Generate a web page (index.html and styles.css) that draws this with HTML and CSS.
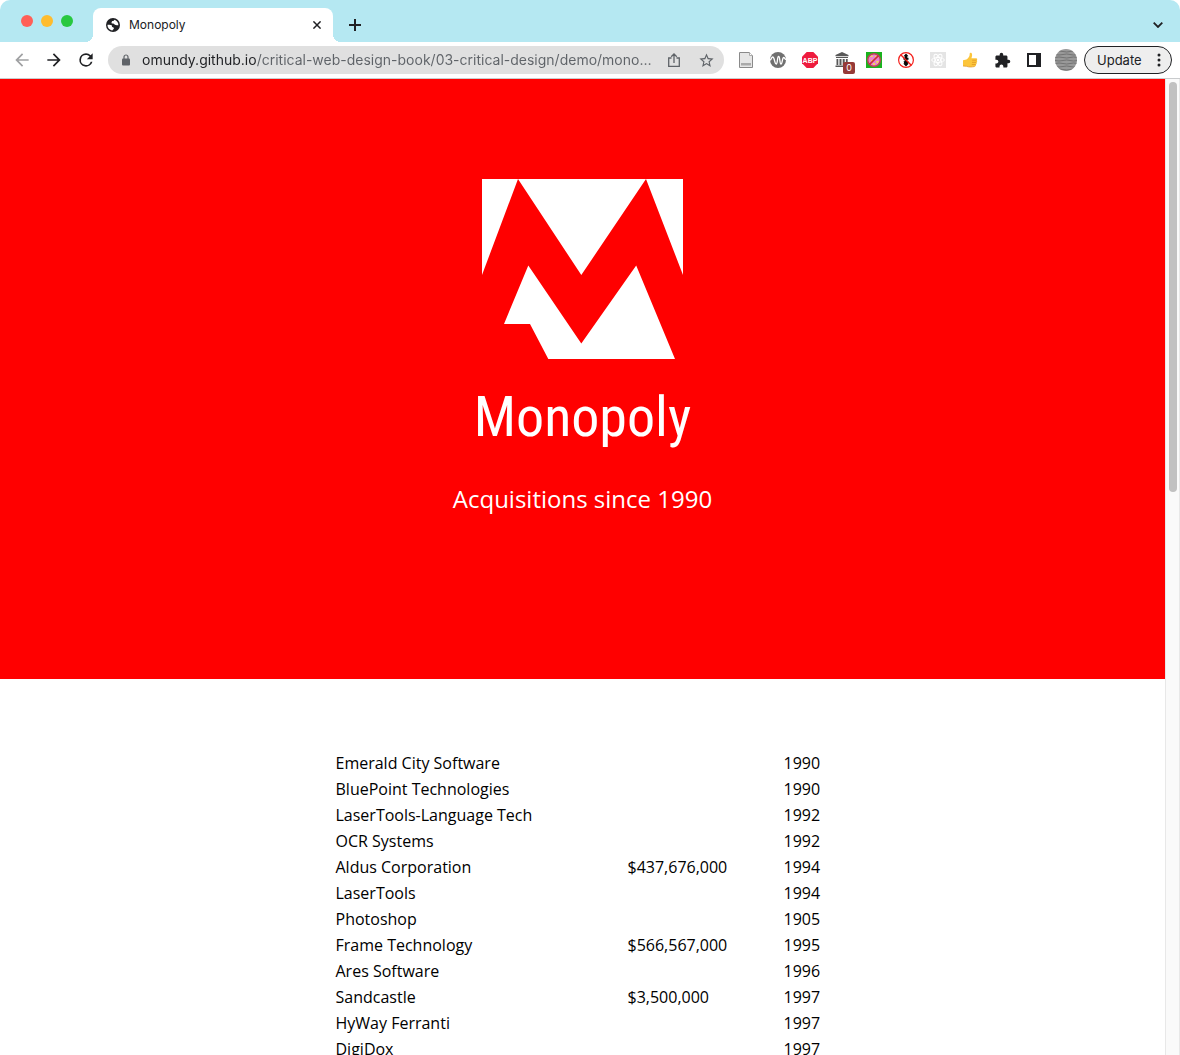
FILE: index.html
```html
<!DOCTYPE html>
<html lang="en">
<head>
<meta charset="utf-8">
<meta name="viewport" content="width=device-width, initial-scale=1">
<title>Monopoly</title>
<link rel="stylesheet" href="styles.css">
</head>
<body>
<div class="browser">
  <header class="tab-strip">
    <div class="traffic-lights">
      <button class="light light-close" aria-label="Close window"></button>
      <button class="light light-min" aria-label="Minimize window"></button>
      <button class="light light-max" aria-label="Zoom window"></button>
    </div>
    <div class="tab">
      <svg class="tab-icon" viewBox="0 0 14 14" aria-hidden="true"><circle cx="7" cy="7" r="7" fill="#202124"/><path d="M1.500 6.800c1.700-.2 3.400-.2 4.200.5.600.7-.1 1.300.6 1.800.8.400 1.600.200 1.600 1.300-.1 1.100-1.400.9-1.500 2.100C3.600 12.200 1.400 9.900 1.500 6.800zM8.300 1.700c0 .9-.9 1.200-1.900 1.400-.8.300-.3 1.100-1 1.600.1.700 1 .8 1.700.9 1.200.2 1.300 1.300 2.600 1.300 1.100 0 1.500.6 2.700.3C12.500 4.400 10.700 2.200 8.300 1.700z" fill="#fff"/></svg>
      <span class="tab-title">Monopoly</span>
      <button class="tab-close" aria-label="Close tab"><svg viewBox="0 0 8 8" width="8" height="8"><path d="M.4.4l7.200 7.200M7.600.4L.4 7.600" stroke="#202124" stroke-width="1.500"/></svg></button>
    </div>
    <button class="strip-button" aria-label="New tab"><svg viewBox="0 0 12 12" width="12" height="12"><path d="M6 0v12M0 6h12" stroke="#202124" stroke-width="2"/></svg></button>
    <button class="strip-button tab-search" aria-label="Search tabs"><svg viewBox="0 0 10 6" width="10" height="6"><path d="M.7.7L5 5 9.300.7" fill="none" stroke="#202124" stroke-width="1.800"/></svg></button>
  </header>

  <div class="toolbar">
    <nav class="button-row" aria-label="History">
      <button class="tool" aria-label="Back"><svg viewBox="0 0 24 24" width="20" height="20"><path fill="#a0a1a3" d="M20 11H7.830l5.590-5.590L12 4l-8 8 8 8 1.410-1.410L7.830 13H20z"/></svg></button>
      <button class="tool" aria-label="Forward"><svg viewBox="0 0 24 24" width="20" height="20"><path fill="#202124" d="M12 4l-1.410 1.410L16.170 11H4v2h12.170l-5.580 5.590L12 20l8-8z"/></svg></button>
      <button class="tool" aria-label="Reload"><svg viewBox="0 0 24 24" width="20" height="20"><path fill="#202124" d="M17.650 6.350A7.960 7.960 0 0 0 12 4a8 8 0 1 0 7.730 10h-2.080A6 6 0 1 1 12 6c1.660 0 3.140.69 4.220 1.780L13 11h7V4z"/></svg></button>
    </nav>
    <div class="omnibox">
      <svg class="lock" viewBox="0 0 8 12" aria-hidden="true"><path d="M2 5V3a2 2 0 0 1 4 0v2" fill="none" stroke="#5f6368" stroke-width="1.200"/><rect y="4.500" width="8" height="7" rx="1" fill="#5f6368"/></svg>
      <input class="url" type="text" aria-label="Address" value="omundy.github.io/critical-web-design-book/03-critical-design/demo/mono…">
      <button class="tool" aria-label="Share"><svg viewBox="0 0 12 14" width="12" height="14"><path d="M3.500 5H.7v8.300h10.600V5H8.500M6 10V1.200M3.200 3.700L6 1l2.800 2.700" fill="none" stroke="#5f6368" stroke-width="1.300"/></svg></button>
      <button class="tool" aria-label="Bookmark"><svg viewBox="0 0 24 24" width="17" height="17"><path fill="#5f6368" d="M22 9.240l-7.190-.62L12 2 9.190 8.630 2 9.240l5.460 4.730L5.820 21 12 17.270 18.180 21l-1.630-7.030zM12 15.400l-3.760 2.270 1-4.280-3.320-2.880 4.380-.38L12 6.100l1.710 4.040 4.380.38-3.320 2.880 1 4.280z"/></svg></button>
    </div>
    <div class="button-row">
      <button class="tool" aria-label="Page notes"><svg viewBox="0 0 16 16" width="16" height="16"><path d="M1.500.5h10l3 3v12h-13z" fill="#e6e6e6" stroke="#8a8a8a"/><path d="M11.500.5v3h3" fill="#fff" stroke="#aaa"/><path d="M3 11h10v2.500H3z" fill="#aaa"/></svg></button>
      <button class="tool" aria-label="Accessibility checker"><svg viewBox="0 0 16 16" width="16" height="16"><circle cx="8" cy="8" r="8" fill="#707070"/><path d="M0 8c1.500 0 1.200-3 2.700-3C4.600 5 4.500 12 6.200 12S7 4.500 8.600 4.500 9.500 12 11 12s1.100-6.500 2.700-6.500c1 0 1 2 2.300 2" fill="none" stroke="#fff" stroke-width="1.300"/></svg></button>
      <button class="tool" aria-label="Ad blocker"><svg viewBox="0 0 16 16" width="16" height="16"><path d="M4.700 0h6.600L16 4.700v6.600L11.300 16H4.700L0 11.300V4.700z" fill="#ee1b3e"/><text x="8" y="10.500" text-anchor="middle" class="abp">ABP</text></svg></button>
      <button class="tool" aria-label="Web archive, 0 captures"><svg viewBox="0 0 16 16" width="16" height="16"><path d="M8 0l6.500 3v1.200h-13V3zM2 5h12v1H2zM2.500 7h1.800v6H2.500zm3 0h2v6h-2zm3.200 0h2v6h-2zm3.200 0h1.800v6h-1.800zM1.500 13.500h13V15h-13z" fill="#585858"/></svg><span class="badge">0</span></button>
      <button class="tool" aria-label="Tracker blocker"><svg viewBox="0 0 16 16" width="16" height="16"><path fill="#19b21d" d="M0 0h16v16H0z"/><circle cx="8" cy="8" r="6.300" fill="#e983ce" stroke="#bd4056" stroke-width="1.500"/><path d="M4 5l2-2 1 2zM9 4h2v2H9zM5 8h2v2H5zM10 9h3l-2 3zM7 11h2v2H7z" fill="#f3d75b"/><path d="M12.400 3.600l-8.800 8.800" stroke="#c92c3c" stroke-width="1.500"/></svg></button>
      <button class="tool" aria-label="Do not track"><svg viewBox="0 0 16 16" width="16" height="16"><path d="M8 1.500l2.500 2.800H9.300v1.500h1.200v2H9.300v1.500h1.200L9.800 11.500h1L8 14.500l-2.800-3h1L5.600 9.300h1V7.800H5.500v-2h1.200V4.300H5.500z" fill="#080808"/><circle cx="8" cy="8" r="7.400" fill="none" stroke="#f4201c" stroke-width="1.200"/><path d="M2.700 2.700l10.600 10.600" stroke="#f4201c" stroke-width="1.300"/></svg></button>
      <button class="tool" aria-label="React tools"><svg viewBox="0 0 16 16" width="16" height="16"><path fill="#e4e4e4" d="M0 0h16v16H0z"/><g fill="none" stroke="#fff"><ellipse cx="8" cy="8" rx="6.300" ry="2.500"/><ellipse cx="8" cy="8" rx="6.300" ry="2.500" transform="rotate(60 8 8)"/><ellipse cx="8" cy="8" rx="6.300" ry="2.500" transform="rotate(120 8 8)"/></g><circle cx="8" cy="8" r="1.200" fill="#fff"/></svg></button>
      <button class="tool" aria-label="Likes"><svg viewBox="0 0 16 16" width="16" height="16"><path d="M1 8.200c1.500-.5 3.200-.4 4.200-1.200C7 5.500 7.800 4 7.700 1.600 7.700.2 9.700.3 10 2c.3 1.600-.1 3-.6 4.200h4.800c1.200 0 1.400 1.600.4 2 .9.500.8 1.900-.2 2.200.6.700.4 1.900-.6 2.100.5.900 0 1.900-1.100 2-3.200.6-5.700.8-8.200-.2L1 14z" fill="#fcc53b"/><path d="M10.200 8.200h4.400M10 10.400h4.400M9.800 12.500h4M1 14l3.500.3c2.700 1 5 .8 8.200.2" fill="none" stroke="#dc9324" stroke-width=".7"/></svg></button>
      <button class="tool" aria-label="Extensions"><svg viewBox="0 0 24 24" width="17" height="17"><path fill="#202124" d="M20.500 11H19V7c0-1.100-.9-2-2-2h-4V3.500a2.500 2.500 0 0 0-5 0V5H4c-1.100 0-1.990.9-1.990 2v3.800H3.500c1.490 0 2.700 1.210 2.700 2.700s-1.210 2.700-2.700 2.700H2V20c0 1.100.9 2 2 2h3.800v-1.500c0-1.490 1.210-2.700 2.700-2.700s2.700 1.210 2.700 2.700V22H17c1.100 0 2-.9 2-2v-4h1.500a2.500 2.500 0 0 0 0-5z"/></svg></button>
      <button class="tool" aria-label="Side panel"><svg viewBox="0 0 14 14" width="14" height="14"><path fill="#202124" fill-rule="evenodd" d="M0 0h14v14H0zM2 2v10h7V2z"/></svg></button>
      <button class="tool" aria-label="Profile"><svg viewBox="0 0 22 22" width="22" height="22"><defs><clipPath id="avatar"><circle cx="11" cy="11" r="11"/></clipPath></defs><g clip-path="url(#avatar)"><path fill="#999" d="M0 0h22v22H0z"/><path d="M0 2.500q4-1 8 0t7 0 8 0M0 5.500q4 1 8 0t7 0 8 0M0 8.500q4-1 8 0t7 0 8 0M0 11.500q4 1 8 0t7 0 8 0M0 14.500q4-1 8 0t7 0 8 0M0 17.500q4 1 8 0t7 0 8 0M0 20.500q4-1 8 0t7 0 8 0" fill="none" stroke="#737373"/></g></svg></button>
      <button class="update">Update<svg viewBox="0 0 4 14" width="4" height="14" aria-hidden="true"><g fill="#202124"><circle cx="2" cy="2" r="1.500"/><circle cx="2" cy="7" r="1.500"/><circle cx="2" cy="12" r="1.500"/></g></svg></button>
    </div>
  </div>

  <div class="viewport">
    <main class="page">
      <section class="hero">
        <svg class="logo" viewBox="0 0 201 180" role="img" aria-label="Monopoly logo"><path fill="#fff" d="M0 0h36L0 96zM36 0h128L99.300 96zM164 0h37v96zM46.300 86.500l53 78 54.900-78L193 180H66.300L48 145H22z"/></svg>
        <h1>Monopoly</h1>
        <p>Acquisitions since 1990</p>
      </section>
      <table class="acquisitions">
        <colgroup><col class="col-name"><col class="col-price"><col></colgroup>
        <tbody>
          <tr><td>Emerald City Software</td><td></td><td>1990</td></tr>
          <tr><td>BluePoint Technologies</td><td></td><td>1990</td></tr>
          <tr><td>LaserTools-Language Tech</td><td></td><td>1992</td></tr>
          <tr><td>OCR Systems</td><td></td><td>1992</td></tr>
          <tr><td>Aldus Corporation</td><td>$437,676,000</td><td>1994</td></tr>
          <tr><td>LaserTools</td><td></td><td>1994</td></tr>
          <tr><td>Photoshop</td><td></td><td>1905</td></tr>
          <tr><td>Frame Technology</td><td>$566,567,000</td><td>1995</td></tr>
          <tr><td>Ares Software</td><td></td><td>1996</td></tr>
          <tr><td>Sandcastle</td><td>$3,500,000</td><td>1997</td></tr>
          <tr><td>HyWay Ferranti</td><td></td><td>1997</td></tr>
          <tr><td>DigiDox</td><td></td><td>1997</td></tr>
        </tbody>
      </table>
    </main>
    <div class="scrollbar"><div class="thumb"></div></div>
  </div>
</div>
</body>
</html>
```
FILE: styles.css
```css
* { box-sizing: border-box; }

body {
  margin: 0;
  background: #fff;
  color: #000;
  font: 16px/22px "Open Sans", "Noto Sans", sans-serif;
}

button {
  margin: 0;
  padding: 0;
  border: 0;
  background: none;
  font: inherit;
  color: inherit;
}

svg { display: block; }

.browser {
  display: flex;
  flex-direction: column;
  height: 100vh;
  overflow: hidden;
}

/* Tab strip */
.tab-strip {
  display: flex;
  align-items: center;
  flex: none;
  height: 42px;
  padding-right: 8px;
  background: #b5e8f2;
  border-radius: 10px 10px 0 0;
  font: 12px/16px Inter, Roboto, sans-serif;
  color: #202124;
}

.traffic-lights {
  display: flex;
  gap: 8px;
  padding: 0 20px 0 21px;
}

.light {
  width: 12px;
  height: 12px;
  border-radius: 50%;
}

.light-close { background: #ff5f57; }
.light-min { background: #febc2e; }
.light-max { background: #28c840; }

.tab {
  position: relative;
  display: flex;
  align-items: center;
  align-self: flex-end;
  gap: 9px;
  width: 240px;
  height: 34px;
  padding: 0 8px 0 13px;
  background: #fff;
  border-radius: 8px 8px 0 0;
}

/* Flared feet where the tab meets the toolbar */
.tab::before,
.tab::after {
  content: "";
  position: absolute;
  bottom: 0;
  width: 8px;
  height: 8px;
}

.tab::before {
  left: -8px;
  background: radial-gradient(circle at 0 0, transparent 8px, #fff 8px);
}

.tab::after {
  right: -8px;
  background: radial-gradient(circle at 100% 0, transparent 8px, #fff 8px);
}

.tab-icon { width: 14px; height: 14px; }
.tab-title { flex: 1; }

.tab-close,
.strip-button,
.tool {
  display: flex;
  align-items: center;
  justify-content: center;
}

.tab-close { width: 16px; height: 16px; }

.strip-button {
  width: 28px;
  height: 28px;
  margin: 8px 0 0 8px;
}

.tab-search { margin-left: auto; }

/* Toolbar */
.toolbar {
  display: flex;
  align-items: center;
  flex: none;
  gap: 8px;
  height: 37px;
  padding: 0 8px;
  border-bottom: 1px solid #c9cbcd;
  font: 13px/16px Inter, Roboto, sans-serif;
  color: #202124;
}

.button-row {
  display: flex;
  align-items: center;
  gap: 4px;
}

.tool {
  position: relative;
  flex: none;
  width: 28px;
  height: 28px;
}

.omnibox {
  display: flex;
  align-items: center;
  flex: 1;
  gap: 4px;
  min-width: 0;
  height: 28px;
  padding: 0 4px 0 14px;
  border-radius: 14px;
  background: #e0e0e0;
}

.lock { flex: none; width: 8px; height: 12px; }

/* The host part of the address is darker than its path */
.url {
  flex: 1;
  min-width: 0;
  height: 20px;
  margin-left: 8px;
  padding: 0;
  border: 0;
  outline: 0;
  font: 14px/20px Inter, sans-serif;
  color: #5f6368;
  background: linear-gradient(to right, #202124 115px, #5f6368 115px);
  -webkit-background-clip: text;
  background-clip: text;
  -webkit-text-fill-color: transparent;
}

.abp {
  font: bold 7px "Liberation Sans", sans-serif;
  fill: #fff;
}

.badge {
  position: absolute;
  right: 1px;
  bottom: 0;
  width: 12px;
  height: 12px;
  border-radius: 2px;
  background: #963a38;
  color: #fff;
  font: 9px/12px Inter, sans-serif;
  text-align: center;
}

.update {
  display: flex;
  align-items: center;
  justify-content: space-between;
  width: 88px;
  height: 28px;
  padding: 0 10px 0 12px;
  border: 1px solid #202124;
  border-radius: 14px;
  background: #eee;
}

/* Web page */
.viewport {
  display: flex;
  flex: 1;
  min-height: 0;
}

.page {
  flex: 1;
  min-width: 0;
  overflow: hidden;
}

.hero {
  display: flex;
  flex-direction: column;
  align-items: center;
  min-height: 600px;
  padding-top: 100px;
  background: #f00;
  color: #fff;
  text-align: center;
}

.logo { width: 201px; height: 180px; }

.hero h1 {
  margin: 20px 0 0;
  font: 400 56px/76px "Ubuntu Condensed", "Liberation Sans Narrow", "Roboto Condensed", "Open Sans Condensed", Roboto, sans-serif;
}

.hero p {
  margin: 28px 0 0;
  font-size: 24px;
  line-height: 32px;
}

.acquisitions {
  width: 500px;
  max-width: 100%;
  margin: 70px auto;
  table-layout: fixed;
  border-spacing: 2px;
}

.acquisitions td {
  height: 24px;
  padding: 1px;
}

.col-name { width: 290px; }
.col-price { width: 154px; }

.scrollbar {
  flex: none;
  width: 15px;
  padding: 3px;
  border: solid #e8e8e8;
  border-width: 0 1px;
  background: #fafafa;
}

.thumb {
  width: 8px;
  height: 410px;
  border-radius: 4px;
  background: #c1c1c1;
}
```
